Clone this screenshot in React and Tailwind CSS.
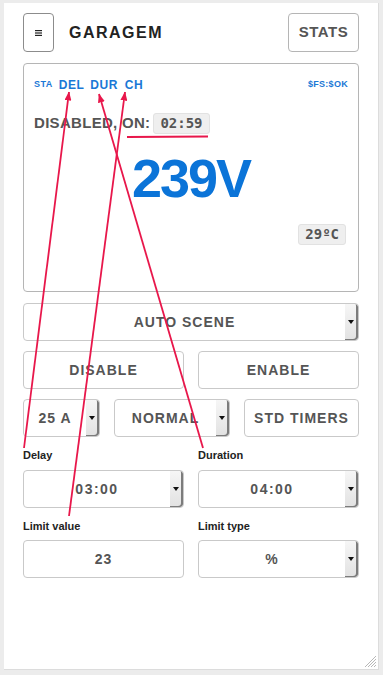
import React from 'react'

const SANS = { fontFamily: '"Liberation Sans", Arial, sans-serif' }
const MONO = { fontFamily: '"DejaVu Sans Mono", "Liberation Mono", monospace' }

const Arrow = () => (
  <svg width="6" height="4" viewBox="0 0 6 4">
    <path d="M0 0 L6 0 L3 4 z" fill="#111" />
  </svg>
)

const Select = ({ children, className = '' }) => (
  <div className={`flex h-[38px] rounded-[4px] border border-[#c9c9c9] bg-white overflow-hidden ${className}`}>
    <div className='flex-1 flex items-center justify-center text-[14px] font-bold tracking-[1px] text-[#555]'>
      {children}
    </div>
    <div className='w-[13px] flex items-center justify-center bg-gradient-to-b from-[#f6f6f6] to-[#e2e2e2] shadow-[inset_-2px_-1px_0_#7c7c7c] rounded-tr-[3px] rounded-br-[3px] pr-[2px]'>
      <Arrow />
    </div>
  </div>
)

const Button = ({ children, className = '' }) => (
  <div className={`flex h-[38px] items-center justify-center rounded-[4px] border border-[#c9c9c9] bg-white text-[14px] font-bold tracking-[1px] text-[#555] ${className}`}>
    {children}
  </div>
)

const Label = ({ children }) => (
  <div className='text-[11px] font-bold text-[#222] leading-[16px]'>{children}</div>
)

const Badge = ({ children }) => (
  <span
    style={MONO}
    className='inline-flex h-[21px] items-center rounded-[3px] border border-[#e2e2e2] bg-[#efefef] px-[6px] text-[14px] font-bold text-[#555]'
  >
    {children}
  </span>
)

const App = () => {
  return (
    <div style={SANS} className='relative h-[675px] w-[383px] bg-[#ececec] pt-[3px] pl-[4px] pr-[4px] pb-[5px] overflow-hidden'>
      <div className='relative h-full bg-white border-r border-b border-[#dcdcdc] px-[19px] pt-[10px]'>
        {/* header */}
        <div className='flex items-center'>
          <div className='flex h-[39px] w-[31px] items-center justify-center rounded-[4px] border border-[#8c8c8c]'>
            <svg width="7" height="6" viewBox="0 0 7 6">
              <rect x="0" y="0" width="7" height="1.2" fill="#222" />
              <rect x="0" y="2.4" width="7" height="1.2" fill="#222" />
              <rect x="0" y="4.8" width="7" height="1.2" fill="#222" />
            </svg>
          </div>
          <div className='ml-[15px] text-[16px] font-bold tracking-[1.5px] text-[#222]'>GARAGEM</div>
          <div className='ml-auto flex h-[39px] w-[71px] items-center justify-center rounded-[4px] border border-[#b5b5b5] text-[15px] font-bold tracking-[0.5px] text-[#555]'>
            STATS
          </div>
        </div>

        {/* display card */}
        <div className='mt-[11px] h-[229px] rounded-[4px] border border-[#b5b5b5] px-[10px] pt-[13px]'>
          <div className='flex h-[16px] items-center text-[#1a78d6] font-bold'>
            <span className='text-[9px] tracking-[0.5px]'>STA</span>
            <span className='ml-[6px] text-[12px] tracking-[0.5px]'>DEL</span>
            <span className='ml-[6px] text-[12px] tracking-[0.5px]'>DUR</span>
            <span className='ml-[7px] text-[12px] tracking-[0.5px]'>CH</span>
            <span className='ml-auto text-[9px] tracking-[0.3px]'>$FS:$OK</span>
          </div>
          <div className='mt-[18px] flex items-center'>
            <span className='text-[15px] font-bold tracking-[0.3px] text-[#555]'>DISABLED, ON:</span>
            <span className='ml-[3px]'><Badge>02:59</Badge></span>
          </div>
          <div className='mt-[16px] text-center text-[54px] leading-none font-bold tracking-[-2px] text-[#0b74d8]'>
            239V
          </div>
          <div className='mt-[19px] flex justify-end pr-[2px]'>
            <Badge>29ºC</Badge>
          </div>
        </div>

        {/* controls */}
        <Select className='mt-[11px]'>AUTO SCENE</Select>
        <div className='mt-[10px] grid grid-cols-2 gap-[14px]'>
          <Button>DISABLE</Button>
          <Button>ENABLE</Button>
        </div>
        <div className='mt-[10px] flex gap-[14px]'>
          <Select className='w-[77px]'>25 A</Select>
          <Select className='w-[116px]'>NORMAL</Select>
          <Button className='flex-1'>STD TIMERS</Button>
        </div>

        <div className='mt-[10px] grid grid-cols-2 gap-x-[14px]'>
          <div>
            <Label>Delay</Label>
            <Select className='mt-[7px]'><span className='tracking-[1.5px]'>03:00</span></Select>
          </div>
          <div>
            <Label>Duration</Label>
            <Select className='mt-[7px]'><span className='tracking-[1.5px]'>04:00</span></Select>
          </div>
          <div className='mt-[10px]'>
            <Label>Limit value</Label>
            <Button className='mt-[6px] tracking-[0.5px]'>23</Button>
          </div>
          <div className='mt-[10px]'>
            <Label>Limit type</Label>
            <Select className='mt-[6px]'>%</Select>
          </div>
        </div>

        {/* resize grip */}
        <svg className='absolute right-[1px] bottom-[1px]' width="13" height="13" viewBox="0 0 13 13">
          <path d="M12 1 L1 12 M12 4 L4 12 M12 7 L7 12 M12 10 L10 12" stroke="#b8b8b8" strokeWidth="1" />
        </svg>
      </div>

      {/* annotation overlay */}
      <svg className='absolute left-0 top-0 pointer-events-none' width="383" height="675" viewBox="0 0 383 675">
        <defs>
          <marker id="ah" markerUnits="userSpaceOnUse" markerWidth="9" markerHeight="7" refX="8.5" refY="3.5" orient="auto">
            <path d="M0 0 L9 3.5 L0 7 z" fill="#e8174b" />
          </marker>
        </defs>
        <line x1="24" y1="448" x2="69" y2="92" stroke="#e8174b" strokeWidth="1.8" markerEnd="url(#ah)" />
        <line x1="69" y1="516" x2="125" y2="92" stroke="#e8174b" strokeWidth="1.8" markerEnd="url(#ah)" />
        <line x1="203" y1="448" x2="99" y2="94" stroke="#e8174b" strokeWidth="1.8" markerEnd="url(#ah)" />
        <line x1="127" y1="137" x2="208" y2="136.5" stroke="#e8174b" strokeWidth="2" />
      </svg>
    </div>
  )
}

export default App
